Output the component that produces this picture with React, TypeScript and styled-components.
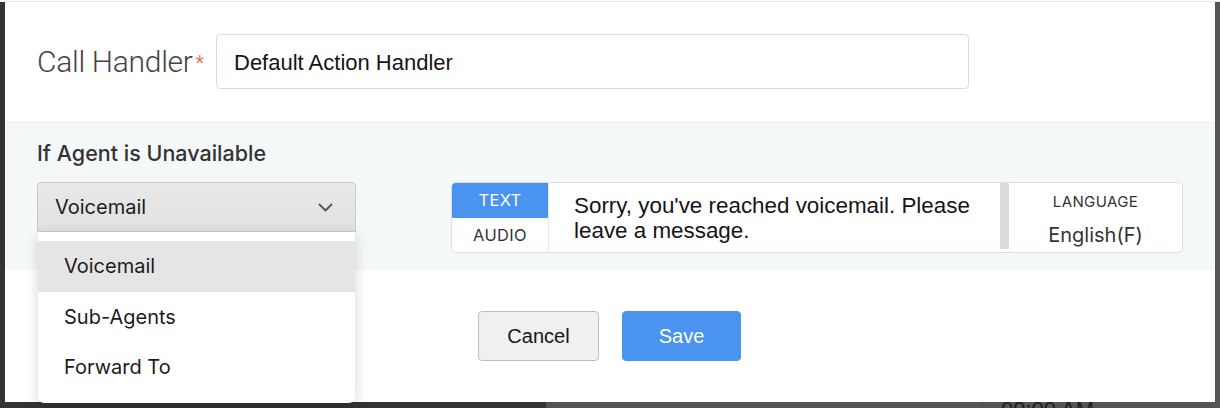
import React from "react";
import styled, { createGlobalStyle } from "styled-components";

const GlobalStyle = createGlobalStyle`
  html, body { margin: 0; padding: 0; background: #ffffff; }
  body { width: 1220px; height: 408px; overflow: hidden; font-family: "Liberation Sans", Arial, sans-serif; }
  * { box-sizing: border-box; }
`;

const Page = styled.div`
  width: 1220px;
  height: 408px;
  display: grid;
  grid-template-rows: 2px 400px 6px;
  grid-template-columns: 5px 1210px 5px;
  background: #ffffff;
`;

const TopLine = styled.div`
  grid-column: 1 / 4;
  border-bottom: 1px solid #e6e6e6;
  margin-left: 5px;
`;

const SideStrip = styled.div<{ $tone: string }>`
  background: ${(p) => p.$tone};
`;

const BottomStrip = styled.div`
  grid-column: 1 / 4;
  display: flex;
  overflow: hidden;
`;

const BottomSegment = styled.div<{ $tone: string; $width?: number }>`
  background: ${(p) => p.$tone};
  ${(p) => (p.$width ? `width: ${p.$width}px; flex: none;` : "flex: 1;")}
  display: flex;
  overflow: hidden;
`;

const BehindCell = styled.div`
  width: 233px;
  border-left: 1px solid #4a4a4a;
  padding-left: 18px;
  overflow: hidden;
`;

const BehindText = styled.span`
  display: block;
  font-family: "Liberation Sans", Arial, sans-serif;
  font-size: 22px;
  line-height: 22px;
  margin-top: -3px;
  color: #1c1c1c;
  white-space: nowrap;
`;

const Modal = styled.div`
  background: #ffffff;
  display: flex;
  flex-direction: column;
  position: relative;
`;

const HeaderSection = styled.div`
  height: 121px;
  border-bottom: 1px solid #e9edef;
  display: flex;
  align-items: center;
  padding: 0 0 2px 32px;
  gap: 5px;
`;

const FieldLabel = styled.label`
  font-family: "Roboto", "Liberation Sans", sans-serif;
  font-weight: 300;
  font-size: 30px;
  color: #444444;
  width: 174px;
  display: flex;
  align-items: center;
  letter-spacing: -0.3px;
`;

const Required = styled.span`
  color: #e8553f;
  font-size: 20px;
  margin-left: 3px;
  margin-top: 4px;
`;

const TextInput = styled.div`
  width: 753px;
  height: 55px;
  border: 1px solid #dcdcdc;
  border-radius: 4px;
  display: flex;
  align-items: center;
  padding: 3px 0 0 17px;
  font-family: "Liberation Sans", Arial, sans-serif;
  font-size: 22px;
  color: #151515;
`;

const OptionSection = styled.div`
  height: 147px;
  background: #f5f8f9;
  padding: 18px 32px 0 32px;
  display: flex;
  flex-direction: column;
`;

const SectionTitle = styled.div`
  font-family: "Inter", "Noto Sans", sans-serif;
  font-size: 21.5px;
  line-height: 24px;
  font-weight: 500;
  color: #333333;
  height: 41px;
`;

const OptionRow = styled.div`
  display: flex;
  align-items: flex-start;
  gap: 95px;
`;

const SelectWrap = styled.div`
  position: relative;
  width: 319px;
`;

const SelectBox = styled.div`
  height: 50px;
  border: 1px solid #c9c9c9;
  border-radius: 4px 4px 0 0;
  background: linear-gradient(#e9e9e9, #e1e1e1);
  display: flex;
  align-items: center;
  justify-content: space-between;
  padding: 0 22px 0 17px;
  font-family: "Inter", "Noto Sans", sans-serif;
  font-size: 20px;
  color: #1c1c1c;
`;

const Menu = styled.div`
  position: absolute;
  top: 50px;
  left: 1px;
  width: 317px;
  background: #ffffff;
  border-radius: 0 0 6px 6px;
  padding: 9px 0 10px;
  box-shadow: 0 4px 14px rgba(0, 0, 0, 0.16);
  z-index: 5;
`;

const MenuItem = styled.div<{ $active?: boolean }>`
  height: 50.5px;
  display: flex;
  align-items: center;
  padding-left: 26px;
  font-family: "Inter", "Noto Sans", sans-serif;
  font-size: 20px;
  color: #1c1c1c;
  background: ${(p) => (p.$active ? "#e5e5e5" : "transparent")};
`;

const MessageBox = styled.div`
  width: 732px;
  height: 71px;
  background: #ffffff;
  border: 1px solid #dedede;
  border-radius: 5px;
  display: flex;
  overflow: hidden;
`;

const TabColumn = styled.div`
  width: 97px;
  border-right: 1px solid #e6e6e6;
  display: flex;
  flex-direction: column;
`;

const Tab = styled.div<{ $active?: boolean }>`
  flex: 1;
  display: flex;
  align-items: center;
  justify-content: center;
  font-family: "Inter", "Noto Sans", sans-serif;
  font-size: 16.5px;
  letter-spacing: 0.3px;
  color: ${(p) => (p.$active ? "#ffffff" : "#333333")};
  background: ${(p) => (p.$active ? "#4a93ee" : "#ffffff")};
`;

const MessageText = styled.div`
  width: 451px;
  padding: 10px 0 0 25px;
  font-family: "Liberation Sans", Arial, sans-serif;
  font-size: 22.4px;
  line-height: 25px;
  color: #151515;
`;

const ScrollTrack = styled.div`
  width: 9px;
  height: 66px;
  background: #dcdcdc;
`;

const LanguageColumn = styled.div`
  flex: 1;
  display: flex;
  flex-direction: column;
  align-items: center;
  padding-top: 10px;
  gap: 12px;
  font-family: "Inter", "Noto Sans", sans-serif;
  color: #333333;
`;

const LanguageLabel = styled.div`
  font-size: 15px;
  line-height: 18px;
  letter-spacing: 0.4px;
`;

const LanguageValue = styled.div`
  font-size: 20px;
  line-height: 24px;
`;

const FooterSection = styled.div`
  flex: 1;
  display: flex;
  justify-content: center;
  align-items: flex-start;
  padding: 41px 1px 0 0;
  gap: 23px;
`;

const Button = styled.button<{ $primary?: boolean }>`
  height: 50px;
  width: ${(p) => (p.$primary ? "119px" : "121px")};
  border-radius: 4px;
  font-family: "Liberation Sans", Arial, sans-serif;
  font-size: 20px;
  cursor: pointer;
  border: 1px solid ${(p) => (p.$primary ? "#4a93ee" : "#bcbcbc")};
  background: ${(p) => (p.$primary ? "#4a93ee" : "#f0f0f0")};
  color: ${(p) => (p.$primary ? "#ffffff" : "#161616")};
`;

const Chevron = () => (
  <svg width="15" height="9" viewBox="0 0 15 9" fill="none">
    <polyline points="1.5,1.5 7.5,7.5 13.5,1.5" stroke="#555" strokeWidth="1.8" strokeLinecap="round" strokeLinejoin="round" />
  </svg>
);

export default function App() {
  return (
    <>
      <GlobalStyle />
      <Page>
        <TopLine />
        <SideStrip $tone="#333333" />
        <Modal>
          <HeaderSection>
            <FieldLabel>
              Call Handler<Required>*</Required>
            </FieldLabel>
            <TextInput>Default Action Handler</TextInput>
          </HeaderSection>
          <OptionSection>
            <SectionTitle>If Agent is Unavailable</SectionTitle>
            <OptionRow>
              <SelectWrap>
                <SelectBox>
                  <span>Voicemail</span>
                  <Chevron />
                </SelectBox>
                <Menu>
                  <MenuItem $active>Voicemail</MenuItem>
                  <MenuItem>Sub-Agents</MenuItem>
                  <MenuItem>Forward To</MenuItem>
                </Menu>
              </SelectWrap>
              <MessageBox>
                <TabColumn>
                  <Tab $active>TEXT</Tab>
                  <Tab>AUDIO</Tab>
                </TabColumn>
                <MessageText>Sorry, you've reached voicemail. Please leave a message.</MessageText>
                <ScrollTrack />
                <LanguageColumn>
                  <LanguageLabel>LANGUAGE</LanguageLabel>
                  <LanguageValue>English(F)</LanguageValue>
                </LanguageColumn>
              </MessageBox>
            </OptionRow>
          </OptionSection>
          <FooterSection>
            <Button>Cancel</Button>
            <Button $primary>Save</Button>
          </FooterSection>
        </Modal>
        <SideStrip $tone="#555555" />
        <BottomStrip>
          <BottomSegment $tone="#333333" $width={546} />
          <BottomSegment $tone="#555555" $width={436} />
          <BottomSegment $tone="#555555">
            <BehindCell>
              <BehindText>09:00 AM</BehindText>
            </BehindCell>
          </BottomSegment>
        </BottomStrip>
      </Page>
    </>
  );
}
